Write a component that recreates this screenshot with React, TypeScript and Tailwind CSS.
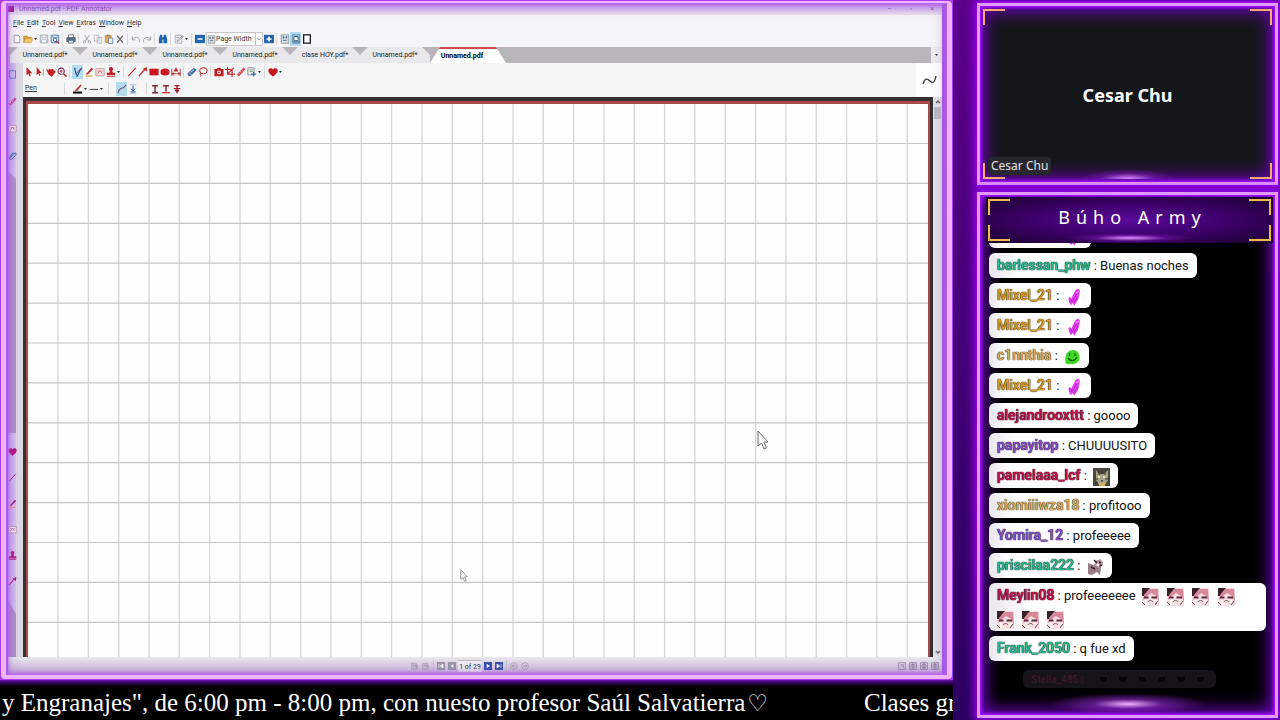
import React from "react";

type IconName = keyof typeof icons;

const icons = {
  file: <path d="M2.5 1.5h5l2 2v7h-7z" fill="#fff" stroke="#8a8a90" />,
  folder: (
    <>
      <path d="M1 10V2.5h4l1 1.500h4V5" fill="#d9a441" stroke="#b98630" />
      <path d="M1 10.500 3 5.500h9l-2 5z" fill="#f0c66a" stroke="#c08d30" strokeWidth=".6" />
    </>
  ),
  save: (
    <>
      <path d="M1.500 1.500h9v9h-9z" fill="#e6e8ec" stroke="#9aa0aa" />
      <path d="M3.500 1.500h5v3h-5zM3 7h6v3.500H3z" fill="#fff" stroke="#9aa0aa" strokeWidth=".7" />
    </>
  ),
  saveAs: (
    <>
      <path d="M1.500 1.500h9v9h-9z" fill="#cfe0f2" stroke="#3f6ea8" />
      <path d="M3.500 1.500h5v2.500h-5z" fill="#fff" stroke="#3f6ea8" strokeWidth=".7" />
      <circle cx="6" cy="7" r="2" fill="#fff" stroke="#26446e" />
      <path d="m7.500 8.500 3.500 3" stroke="#b03030" strokeWidth="1.500" />
    </>
  ),
  print: (
    <>
      <path d="M3 1h6v4H3z" fill="#fff" stroke="#5c6b80" />
      <path d="M1 4.500h10V9H1z" fill="#5f7492" stroke="#3d4c63" />
      <path d="M3 7.500h6V11H3z" fill="#cde3fa" stroke="#3d4c63" strokeWidth=".7" />
    </>
  ),
  cut: (
    <>
      <path d="M3 1l5 7.500M9 1 4 8.500" stroke="#9a9a9e" />
      <circle cx="3" cy="9.500" r="1.500" stroke="#9a9a9e" />
      <circle cx="9" cy="9.500" r="1.500" stroke="#9a9a9e" />
    </>
  ),
  copy: <path d="M1.500 1.500h5.500v7H1.500zM5 4h5.500v7H5z" fill="#f2f2f2" stroke="#b5b5ba" />,
  paste: (
    <>
      <path d="M1.500 2h7v8h-7z" fill="#e8b45a" stroke="#c98a2c" />
      <path d="M3.500 1h3v2h-3z" fill="#777" />
      <path d="M5.500 5h5v6.500h-5z" fill="#fff" stroke="#5577aa" />
    </>
  ),
  remove: <path d="m2.500 2 7 8.500M9.500 2l-7 8.500" stroke="#6c6c70" strokeWidth="1.600" />,
  undo: <path d="M1.500 3v4h4M2 6.500C4 3 10 3.500 10 7.500V10" stroke="#a0a0a5" strokeWidth="1.200" />,
  redo: <path d="M10.500 3v4h-4M10 6.500C8 3 2 3.500 2 7.500V10" stroke="#a0a0a5" strokeWidth="1.200" />,
  find: (
    <>
      <path d="M2.500 1h2.500v3l.5 7H1V6zM7 1h2.500L11 6v5H6.500V4z" fill="#1f66b0" />
      <path d="M5 4h2v3H5z" fill="#174c86" />
    </>
  ),
  edit: (
    <>
      <path d="M1.500 1.500h8v9.500h-8z" fill="#eef1f4" stroke="#a5abb3" />
      <path d="m4 9 .5-2L10 2l1 1-5 5zM3 4h3" stroke="#8b9299" />
    </>
  ),
  minus: (
    <>
      <path d="M0 1h12v10H0z" fill="#2265ad" />
      <path d="M3 6h6" stroke="#fff" strokeWidth="1.800" />
    </>
  ),
  plus: (
    <>
      <path d="M0 1h12v10H0z" fill="#2265ad" />
      <path d="M3 6h6M6 3v6" stroke="#fff" strokeWidth="1.800" />
    </>
  ),
  page: (
    <>
      <path d="M1.500 1h9v10h-9z" fill="#dce7f0" stroke="#7f8b98" />
      <path d="M3.500 4h2M6.500 4h2M3.500 7.500h5M4 2.500v3M8 2.500v3" stroke="#40566e" />
    </>
  ),
  fit: (
    <>
      <path d="M1.500 1h9v10h-9z" fill="#a8d4f2" stroke="#4d85b5" />
      <path d="M3.500 3h5v5h-5zM2 9.500h8" fill="#fff" stroke="#32495f" />
    </>
  ),
  full: <path d="M2 1h8v10H2z" fill="#fff" stroke="#111" strokeWidth="1.500" />,
  arrow: <path d="M3 0v10l2.300-2 1.500 3.500 1.500-.8L6.800 7.500H10z" fill="#c22126" />,
  arrowText: (
    <>
      <path d="M2 0v9.500l2-1.700 1.300 3L6.500 10 5.300 7.200H8z" fill="#c22126" />
      <path d="M10 2v9" stroke="#c98" />
    </>
  ),
  hand: <path d="m0 2 3 2 .5-2L6 3l2-1 2 2.500 1-.5.500 2L9 9l-2 3-4-3z" fill="#c22126" />,
  zoom: (
    <>
      <circle cx="5" cy="5" r="3.700" fill="#e9f0fa" stroke="#7b3550" strokeWidth="1.300" />
      <path d="M3 5h4M5 3v4" stroke="#c22126" />
      <path d="m8 8 3.500 3.500" stroke="#c22126" strokeWidth="1.800" />
    </>
  ),
  pen: (
    <>
      <path d="M2 1 3 6l2 5L9 3l1.500-1.500" stroke="#1e5c9c" strokeWidth="1.500" />
      <path d="m4 8 6-7" stroke="#8d4560" strokeWidth="1.200" />
    </>
  ),
  marker: (
    <>
      <path d="m2 9 7-8 2 1.500L4.500 9z" fill="#c22126" />
      <path d="M2 11h8" stroke="#dca338" strokeWidth="1.500" />
    </>
  ),
  textBox: (
    <>
      <path d="M1 2h10v8.500H1z" fill="#f5e7e7" stroke="#c48f92" />
      <path d="M3 8.500 6 4l2.500 4M3 5h2M7.500 5H9" stroke="#bd6267" />
    </>
  ),
  stamp: <path d="M6 0a2.500 2.500 0 0 1 1.500 4.500L8 7h3v3H1V7h3l.5-2.500A2.500 2.500 0 0 1 6 0M1 11h10v1H1z" fill="#c22126" />,
  line: <path d="m1.500 11 9-10" stroke="#c22126" strokeWidth="1.300" />,
  arrowLine: (
    <>
      <path d="m1 11 7-8" stroke="#c22126" strokeWidth="1.500" />
      <path d="m11 0-.5 5.500L6 2z" fill="#c22126" />
    </>
  ),
  rect: <path d="M.5 2h11v8H.5z" fill="#c9181e" />,
  ellipse: <ellipse cx="6" cy="6" rx="5.500" ry="4.200" fill="#c9181e" />,
  measure: (
    <>
      <path d="M1 2v9M11 2v9M1 8h10" stroke="#c22126" />
      <path d="M6 1 3.500 5h5zM3 6l-2 2 2 2M9 6l2 2-2 2" fill="#c22126" stroke="#c22126" strokeWidth=".6" />
    </>
  ),
  eraser: (
    <>
      <path d="M1 8 8 1.500l3 2L4.500 10.500H2z" fill="#3c68a8" stroke="#2b4d80" strokeWidth=".7" />
      <path d="M3 7.500 6 10M4.500 6.500l4-3.500" stroke="#dfe9f6" />
    </>
  ),
  lasso: (
    <>
      <ellipse cx="6.500" cy="4.500" rx="4.500" ry="3.800" stroke="#c22126" strokeWidth="1.200" />
      <path d="M3 7c-1.500 1.500 1.500 2 0 4.500" stroke="#c22126" strokeWidth="1.200" />
    </>
  ),
  camera: (
    <>
      <path d="M.5 2.500h3L4.500 1h3l1 1.500h3v8.500H.5z" fill="#c22126" />
      <circle cx="6" cy="6.500" r="2.300" fill="#f8e9e9" />
      <circle cx="6" cy="6.500" r="1" fill="#c22126" />
    </>
  ),
  crop: <path d="M3 0v8.500h9M0 3h8.500v9M10.500 1 3.500 8" stroke="#c22126" strokeWidth="1.300" />,
  ruler: (
    <>
      <path d="M1 9 9 .5l2.500 2L3.500 11.500z" fill="#d0474b" />
      <path d="m3 7 1.500 1.500M5 5l1.500 1.500M7 3l1.500 1.500" stroke="#f4d5d5" />
    </>
  ),
  insert: (
    <>
      <path d="M1 1h7.500v8.500H1z" fill="#e9eef3" stroke="#7d8794" />
      <path d="M3 3.500h4M3 5.500h4" stroke="#5aa05f" />
      <path d="M5 8.500h6M8 6v5.500" stroke="#3a70ad" strokeWidth="1.500" />
    </>
  ),
  heart: <path d="M6 11.500C1 7.500 0 5.500.500 3.500S4.500.500 6 3c1.500-2.500 5-1.500 5.500.500S11 7.500 6 11.500" fill="#c5161c" />,
  color: (
    <>
      <path d="m2 8 7-7.500 1.500 1L5 8.500z" fill="#b8373b" />
      <path d="M0 9h11v2.500H0z" fill="#111" />
    </>
  ),
  width: <path d="M1 6.500h10" stroke="#444" strokeWidth="1.200" />,
  curve: <path d="M1 11C4 1 6 9 11 1" stroke="#6a4b74" strokeWidth="1.300" />,
  pressure: (
    <>
      <path d="M2 1h8M2 11h8" stroke="#8fb4d4" />
      <path d="M6 2v5M3.500 5.500 6 8.500l2.500-3M3 9.500h6" stroke="#1f5c9e" strokeWidth="1.200" />
    </>
  ),
  serif: <path d="M2.500 2h7M6 2v8.500M2.500 10.500h7" stroke="#7a2a32" strokeWidth="1.700" />,
  serifRed: (
    <>
      <path d="M2.500 2h7M6 2v7" stroke="#7a2a32" strokeWidth="1.700" />
      <path d="M1 10.500h10" stroke="#d4282c" strokeWidth="1.500" />
    </>
  ),
  pin: <path d="M3 2h6M6 2v9M2 5.500h8M4 7l2 3 2-3" stroke="#a3182c" strokeWidth="1.600" />,
  clip: <path d="m3 9 5-6c1.500-1.500 3.500.5 2.500 2L5.500 11C3 13 .5 10 2 8l5-6" stroke="#6a45b8" strokeWidth="1.200" />,
  note: <path d="M2 1h8v10H2z" stroke="#8b50b8" />,
  first: (
    <>
      <path d="M0 0h12v12H0z" fill="#9997a6" />
      <path d="M3 3v6M9 3 5 6l4 3z" fill="#fff" stroke="#fff" />
    </>
  ),
  prev: (
    <>
      <path d="M0 0h12v12H0z" fill="#9997a6" />
      <path d="M8 3 4 6l4 3z" fill="#fff" />
    </>
  ),
  next: (
    <>
      <path d="M0 0h12v12H0z" fill="#3450a8" />
      <path d="m4 2.500 5 3.500-5 3.500z" fill="#fff" />
    </>
  ),
  last: (
    <>
      <path d="M0 0h12v12H0z" fill="#3450a8" />
      <path d="M9 3v6M3 3l4 3-4 3z" fill="#fff" stroke="#fff" />
    </>
  ),
  back: (
    <>
      <circle cx="6" cy="6" r="5" stroke="#9995a3" />
      <path d="M9 6H3.500M6 3.500 3.500 6 6 8.500" stroke="#8b8796" />
    </>
  ),
  forward: (
    <>
      <circle cx="6" cy="6" r="5" stroke="#9995a3" />
      <path d="M3 6h5.500M6 3.500 8.500 6 6 8.500" stroke="#8b8796" />
    </>
  ),
  grid: <path d="M1 1h10v10H1zM6 1v10M1 6h10M3 3.500h6M3 8.500h6" stroke="#75708c" />,
  single: <path d="M1 1h10v10H1zM4 4h4v5M4 6h2" stroke="#85708f" />,
  rotate: <path d="M1 2h7v9H1zM3 5h7v6M5 7h3" fill="#c2bfcb" stroke="#a19daa" />,
};

function Icon({ name, className = "size-[10px]" }: { name: IconName; className?: string }) {
  return (
    <svg viewBox="0 0 12 12" fill="none" className={`shrink-0 ${className}`} aria-hidden="true">
      {icons[name]}
    </svg>
  );
}

function Tool({ name, active = false }: { name: IconName; active?: boolean }) {
  return (
    <button
      aria-label={name}
      className={`flex h-[14px] w-[11px] shrink-0 items-center justify-center ${active ? "bg-[#b5dcec]" : ""}`}
    >
      <Icon name={name} />
    </button>
  );
}

function Caret() {
  return (
    <svg viewBox="0 0 5 12" className="h-3 w-[5px] shrink-0" aria-hidden="true">
      <path d="M1 5h3L2.500 7z" fill="#333" />
    </svg>
  );
}

function Sep() {
  return <span className="mx-[2px] h-3 w-px shrink-0 bg-[#d9d9dc]" />;
}

function ToolRow({ items }: { items: string[] }) {
  return (
    <>
      {items.map((item, i) => {
        if (item === "|") return <Sep key={i} />;
        if (item === "v") return <Caret key={i} />;
        const active = item.startsWith("*");
        return <Tool key={i} name={(active ? item.slice(1) : item) as IconName} active={active} />;
      })}
    </>
  );
}

const menus = ["File", "Edit", "Tool", "View", "Extras", "Window", "Help"];
const tabs = ["Unnamed.pdf*", "Unnamed.pdf*", "Unnamed.pdf*", "Unnamed.pdf*", "clase HOY.pdf*", "Unnamed.pdf*"];

function TabStrip() {
  return (
    <div className="flex h-4 shrink-0 items-end bg-[#b8b6b9] pl-[2px]">
      <div className="flex h-4 w-[420px] shrink-0 bg-[linear-gradient(#b8b6b9_8px,#e9e8ea_8px)]">
        {tabs.map((tab, i) => (
          <button
            key={i}
            className="flex-1 bg-[#e9e8ea] pt-px text-center leading-[15px] text-[#222] [clip-path:polygon(8px_0,calc(100%-8px)_0,100%_8px,100%_100%,0_100%,0_8px)]"
          >
            {tab}
          </button>
        ))}
      </div>
      <button className="h-4 w-[76px] shrink-0 bg-white text-center font-bold text-black [clip-path:polygon(10px_0,66px_0,100%_100%,0_100%)]">
        <span className="block h-[2px] bg-[#cf4a4a]" />
        <span className="block pr-3 leading-[14px]">Unnamed.pdf</span>
      </button>
      <span className="flex-1" />
      <button aria-label="All documents" className="flex h-4 w-[11px] items-center justify-center bg-[#ececf0]">
        <Caret />
      </button>
    </div>
  );
}

function GraphPaper() {
  const columns = Array.from({ length: 29 }, (_, i) => 30 + i * 30.33);
  const rows = Array.from({ length: 13 }, (_, i) => 39.500 + i * 39.900);
  return (
    <svg viewBox="0 0 900 553" preserveAspectRatio="none" className="absolute inset-0 size-full" aria-hidden="true">
      {columns.map((x) => (
        <path key={x} d={`M${x} 0V553`} stroke="#d6d6d8" strokeWidth="1.300" />
      ))}
      {rows.map((y) => (
        <path key={y} d={`M0 ${y}H900`} stroke="#c6c6c8" strokeWidth="1.200" />
      ))}
    </svg>
  );
}

function Pointer({ className }: { className: string }) {
  return (
    <svg viewBox="0 0 12 20" className={className} aria-hidden="true">
      <path d="M1 1v15l3.500-3 2.500 6 2.500-1-2.500-6H11z" fill="#fff" stroke="#666" />
    </svg>
  );
}

function SideBar() {
  const lower: IconName[] = ["heart", "line", "marker", "textBox", "stamp", "arrowLine"];
  return (
    <div className="flex w-[15px] shrink-0 flex-col bg-[#dcd8e2]">
      <div className="flex w-[8px] flex-1 flex-col items-center bg-linear-to-r from-[#c9a2f8] to-[#d8c6ea]">
        <div className="flex flex-col gap-[18px] pt-[7px] hue-rotate-[-45deg]">
          <Icon name="note" className="size-[9px]" />
          <Icon name="ruler" className="size-[9px]" />
          <Icon name="textBox" className="size-[9px]" />
          <Icon name="clip" className="size-[9px]" />
        </div>
        <div className="mt-[11px] w-full flex-1 bg-linear-to-r from-[#b183e0] to-[#ab98b8] [clip-path:polygon(0_0,100%_8px,100%_100%,0_100%)]" />
        <div className="flex flex-col gap-[17px] py-[14px] hue-rotate-[-45deg]">
          {lower.map((name) => (
            <Icon key={name} name={name} className="size-[9px]" />
          ))}
        </div>
        <div className="h-[57px] w-full bg-linear-to-r from-[#b183e0] to-[#ab98b8] [clip-path:polygon(0_0,100%_14px,100%_100%,0_100%)]" />
      </div>
    </div>
  );
}

function Annotator() {
  return (
    <section className="relative flex min-h-0 flex-1 flex-col overflow-hidden rounded-sm border-t-2 border-r-[5px] border-b-4 border-l-[5px] border-[#f3b4ff] bg-[#a45ae6] pr-[5px] pl-[2px] font-['Roboto',sans-serif] text-[7px] text-[#333]">
      <header className="flex h-3 shrink-0 items-center gap-[5px] bg-linear-to-b from-[#c795f0] to-[#e9e4ee] text-[#8a4fb0]">
        <span className="size-[6px] bg-[#a0108c]" />
        <span className="flex-1 leading-[10px]">Unnamed.pdf - PDF Annotator</span>
        <span className="flex gap-[18px] pr-2 leading-[10px]">
          <span>–</span>
          <span>▫</span>
          <span>×</span>
        </span>
      </header>
      <nav className="flex h-4 shrink-0 items-center gap-[3px] bg-[#f5f4f6] pl-[5px]">
        {menus.map((m) => (
          <button key={m}>
            <span className="underline">{m[0]}</span>
            {m.slice(1)}
          </button>
        ))}
      </nav>
      <div className="flex h-4 shrink-0 items-center bg-[#f5f4f6] pl-[3px]">
        <ToolRow items={["file", "folder", "v", "save", "saveAs", "|", "print", "|", "cut", "copy", "paste", "remove", "|", "undo", "redo", "|", "find", "|", "edit", "v", "|", "minus"]} />
        <label className="ml-px flex h-[14px] w-[57px] items-center border border-[#c5c5ca] bg-white">
          <Icon name="page" className="size-[9px]" />
          <select aria-label="Zoom" className="min-w-0 flex-1 appearance-none bg-transparent leading-3">
            <option>Page Width</option>
          </select>
          <svg viewBox="0 0 8 12" className="h-3 w-[7px] border-l border-[#c5c5ca]" fill="none" aria-hidden="true">
            <path d="m2 5 2 2 2-2" stroke="#555" />
          </svg>
        </label>
        <ToolRow items={["plus", "|", "page", "*fit", "full"]} />
      </div>
      <TabStrip />
      <div className="flex min-h-0 flex-1">
        <SideBar />
        <div className="flex min-w-0 flex-1 flex-col">
          <div className="flex h-[34px] shrink-0 bg-white">
            <div className="flex min-w-0 flex-1 flex-col bg-[#f5f5f6]">
              <div className="flex h-[17px] items-center">
                <ToolRow items={["arrow", "arrowText", "hand", "zoom", "|", "*pen", "marker", "textBox", "stamp", "v", "|", "line", "arrowLine", "rect", "ellipse", "measure", "|", "eraser", "lasso", "|", "camera", "crop", "ruler", "insert", "v", "|", "heart", "v"]} />
              </div>
              <div className="flex h-[17px] items-center pl-[2px]">
                <span className="w-[37px] underline">Pen</span>
                <Sep />
                <span className="w-[5px]" />
                <ToolRow items={["color", "v", "width", "v"]} />
                <span className="w-[2px]" />
                <Sep />
                <span className="w-[5px]" />
                <ToolRow items={["*curve", "pressure"]} />
                <span className="w-[6px]" />
                <Sep />
                <ToolRow items={["serif", "serifRed", "pin"]} />
              </div>
            </div>
            <svg viewBox="0 0 26 34" fill="none" className="h-[34px] w-[26px]" aria-hidden="true">
              <path d="M7 21c2-6 4-6 7-3s5 1 6-5" stroke="#3c3a40" strokeWidth="1.300" />
            </svg>
          </div>
          <div className="flex min-h-0 flex-1">
            <div className="flex min-w-0 flex-1 border-x-[3px] border-t-4 border-[#37302f]">
              <div className="relative min-w-0 flex-1 border-x-2 border-t-[3px] border-[#a8494a] bg-[#fefefe]">
                <GraphPaper />
                <Pointer className="absolute top-[59%] left-[81%] h-5 w-3" />
                <Pointer className="absolute top-[84%] left-[48%] h-[13px] w-2" />
              </div>
            </div>
            <div className="flex w-[9px] shrink-0 flex-col items-center justify-between bg-[#e3e1e9]">
              <div className="flex flex-col items-center">
                <svg viewBox="0 0 8 10" className="h-[10px] w-2" fill="none" aria-hidden="true">
                  <path d="m2 6 2-2 2 2" stroke="#666" strokeWidth="1.500" />
                </svg>
                <span className="h-3 w-[7px] bg-[#bcbac4]" />
              </div>
              <svg viewBox="0 0 8 10" className="h-[10px] w-2" fill="none" aria-hidden="true">
                <path d="m2 4 2 2 2-2" stroke="#666" strokeWidth="1.500" />
              </svg>
            </div>
          </div>
        </div>
      </div>
      <footer className="flex h-[18px] shrink-0 items-center bg-linear-to-b from-[#e9e8ec] to-[#c9b4dc]">
        <div className="flex flex-1 items-center justify-center gap-[3px] pl-[34px]">
          <Icon name="rotate" className="size-[8px]" />
          <Icon name="rotate" className="size-[8px]" />
          <span className="h-3 w-px bg-[#c5c2cc]" />
          <Icon name="first" className="size-[8px]" />
          <Icon name="prev" className="size-[8px]" />
          <input
            aria-label="Page"
            readOnly
            value="1 of 29"
            className="-mx-px h-3 w-[24px] border-t border-[#bbb] bg-[#efedf2] text-center"
          />
          <Icon name="next" className="size-[8px]" />
          <Icon name="last" className="size-[8px]" />
          <span className="h-3 w-px bg-[#c5c2cc]" />
          <Icon name="back" className="size-[8px]" />
          <Icon name="forward" className="size-[8px]" />
        </div>
        <div className="flex w-[44px] gap-[3px]">
          <Icon name="single" className="size-[8px]" />
          <Icon name="grid" className="size-[8px]" />
          <Icon name="grid" className="size-[8px]" />
          <Icon name="grid" className="size-[8px]" />
        </div>
      </footer>
      <div className="pointer-events-none absolute inset-0 shadow-[inset_0_0_4px_2px_#b45cf0,inset_0_0_14px_3px_#8a50b855]" />
    </section>
  );
}

function Corners({ className, inset }: { className: string; inset: string }) {
  return (
    <div className={`pointer-events-none absolute ${inset} ${className}`}>
      <span className="absolute top-0 left-0 h-4 w-[22px] border-t-2 border-l-2 border-inherit" />
      <span className="absolute top-0 right-0 h-4 w-[22px] border-t-2 border-r-2 border-inherit" />
      <span className="absolute bottom-0 left-0 h-4 w-[22px] border-b-2 border-l-2 border-inherit" />
      <span className="absolute right-0 bottom-0 h-4 w-[22px] border-r-2 border-b-2 border-inherit" />
    </div>
  );
}

const neon =
  "relative border-[3px] border-[#e29aff] shadow-[0_0_8px_3px_#9d00f5,inset_0_0_3px_2px_#a010ff,inset_0_0_16px_6px_#6a00b8]";

function Camera() {
  return (
    <section className={`${neon} flex h-[182px] shrink-0 flex-col bg-[#15161a] font-['Noto_Sans',sans-serif] text-white`}>
      <Corners inset="inset-[3px]" className="border-[#ffab72]" />
      <h2 className="flex flex-1 items-center justify-center pt-[27px] text-[18px] font-bold">Cesar Chu</h2>
      <span className="mb-[7px] ml-2 self-start rounded-sm bg-[#29272e] px-[3px] text-[12px] leading-[18px] text-[#e4e2e8]">
        Cesar Chu
      </span>
      <span className="absolute bottom-[3px] left-1/2 h-[10px] w-24 -translate-x-1/2 bg-[radial-gradient(ellipse_at_bottom,#e08cff,#8a20c866_40%,transparent_70%)]" />
    </section>
  );
}

type EmoteName = "glove" | "smile" | "cat" | "pig" | "anime";

const emotes: Record<EmoteName, React.ReactNode> = {
  glove: (
    <>
      <path d="M4 16c-2-4-2-7 0-7l1 2 4-8c1-2 3-3 5-1l-1 6c0 3-2 5-3 7l-2 3-1-3-2 2z" fill="#e63af0" />
      <path d="m6 14 5-9M8 15l4-7M4 10l2 4" stroke="#b02cc0" />
      <path d="m10 5 3-2" stroke="#ff9bff" />
    </>
  ),
  smile: (
    <>
      <path d="M2 16c-1-3-1-9 1-11 3-4 10-4 12 1 2 6-1 10-6 10z" fill="#3fd920" />
      <path d="M5.500 5v3M11 5v3M4 10c3 4 7 3 9-1" fill="none" stroke="#14560c" strokeWidth="1.300" />
    </>
  ),
  cat: (
    <>
      <path d="M0 0h17v18H0z" fill="#4b493f" />
      <path d="m3 2 3 4h5l4-4v10l-3 5H6l-3-5z" fill="#a9a38e" />
      <path d="M6 3v4M9 2v4M12 3v4M2 11h3M12 11h4M5 14l-3 2" stroke="#3b392f" />
      <path d="M5 9h2M10 9h2" stroke="#e4e7b1" strokeWidth="2" />
      <path d="M8 12h2l-1 2z" fill="#2b2520" />
      <path d="M6 15h6v3H6z" fill="#d9ad55" />
    </>
  ),
  pig: (
    <>
      <path d="M1 5l6 2 3-5 6 2-2 5-1 8-3-3-5 3-4-1z" fill="#9a7c86" />
      <path d="m8 3 6-2 2 6-4 3-4-2z" fill="#b996a0" />
      <path d="M7 2l3 3M12 4l2 1M12 8l3-1M4 9l4 2" stroke="#39262e" strokeWidth="1.500" />
      <path d="m10 6 2 2" stroke="#fff" strokeWidth="2" />
    </>
  ),
  anime: (
    <>
      <path d="M0 0h17v18H0z" fill="#f4dfe0" />
      <path d="M0 0h8L2 8H0z" fill="#37222a" />
      <path d="m2 7 5-6h9l1 13-3-6-5-3-5 4-3 3z" fill="#d9889a" />
      <path d="M2 9.500h4.500M9.500 9.500H15" stroke="#5f2a3e" strokeWidth="2" />
      <path d="M6 14c1-2 4-2 5 0M0 14l3 3M16 13l-3 4" fill="none" stroke="#8a4c5d" />
      <path d="M4 12v4h3M13 12v3" stroke="#fff" strokeWidth="1.500" fill="none" />
    </>
  ),
};

function Emote({ name }: { name: EmoteName }) {
  return (
    <svg
      viewBox="0 0 17 18"
      className="-my-[3px] mr-[5px] inline-block h-[18px] w-[17px] align-middle last:mr-0"
      role="img"
      aria-label={name}
    >
      {emotes[name]}
    </svg>
  );
}

interface Message {
  user: string;
  color: string;
  text?: string;
  emotes?: EmoteName[];
}

const orange = "text-[#e09a20]";
const teal = "text-[#2cbb94]";
const crimson = "text-[#c0134e]";
const violet = "text-[#8b4fc8]";
const sand = "text-[#dcae62]";

const messages: Message[] = [
  { user: "Mixel_21", color: orange, emotes: ["glove"] },
  { user: "barlessan_phw", color: teal, text: "Buenas noches" },
  { user: "Mixel_21", color: orange, emotes: ["glove"] },
  { user: "Mixel_21", color: orange, emotes: ["glove"] },
  { user: "c1nnthia", color: sand, emotes: ["smile"] },
  { user: "Mixel_21", color: orange, emotes: ["glove"] },
  { user: "alejandrooxttt", color: crimson, text: "goooo" },
  { user: "papayitop", color: violet, text: "CHUUUUSITO" },
  { user: "pamelaaa_lcf", color: crimson, emotes: ["cat"] },
  { user: "xiomiiiwza18", color: sand, text: "profitooo" },
  { user: "Yomira_12", color: violet, text: "profeeeee" },
  { user: "priscilaa222", color: teal, emotes: ["pig"] },
  {
    user: "Meylin08",
    color: crimson,
    text: "profeeeeeee",
    emotes: ["anime", "anime", "anime", "anime", "anime", "anime", "anime"],
  },
  { user: "Frank_2050", color: teal, text: "q fue xd" },
];

function Chat() {
  return (
    <section className={`${neon} flex min-h-0 flex-1 flex-col bg-black`}>
      <header className="relative mt-[2px] mr-[2px] ml-[6px] flex h-[46px] shrink-0 items-center justify-center bg-[radial-gradient(ellipse_at_center,#5a0a9c,#3c0068_50%,#1b002e)] font-['Noto_Sans',sans-serif] text-white">
        <Corners inset="inset-[2px]" className="border-[#f2b84c]" />
        <h1 className="pb-[6px] pl-[6px] text-[18px] tracking-[6px]">Búho Army</h1>
        <span className="absolute bottom-0 left-1/2 h-[10px] w-32 -translate-x-1/2 bg-[radial-gradient(ellipse_at_center,#e58cff,#8a20c866_40%,transparent_70%)]" />
      </header>
      <ul className="flex min-h-0 flex-1 flex-col items-start justify-end gap-[5px] overflow-hidden pr-[9px] pl-[9px] font-['Roboto',sans-serif] text-[13px] leading-[23px]">
        {messages.map((m, i) => (
          <li
            key={i}
            className="shrink-0 rounded-md bg-linear-to-r from-[#e9e6ee] to-white to-15% px-2 pt-px pb-px text-[#111]"
          >
            <b
              className={`${m.color} text-[14px] leading-[22px] font-medium [text-shadow:0_0_1px_#222,0_0_1px_#333,0_0_1px_currentColor]`}
            >
              {m.user}
            </b>
            <span>&nbsp;: {m.text ? `${m.text} ` : " "}</span>
            {m.emotes && (
              <span className="ml-[3px]">
                {m.emotes.map((e, j) => (
                  <React.Fragment key={j}>
                    {j > 0 && " "}
                    <Emote name={e} />
                  </React.Fragment>
                ))}
              </span>
            )}
          </li>
        ))}
      </ul>
      <div className="mx-[43px] mt-[9px] mb-[27px] flex h-[18px] w-[193px] shrink-0 items-center gap-4 rounded-md bg-[#17131a] px-2 font-['Roboto',sans-serif] text-[10px] text-[#3d1826]">
        <b>Stella_485 :</b>
        <span className="flex flex-1 justify-between pr-1 text-black">
          {Array.from({ length: 6 }, (_, i) => (
            <span key={i} className="h-[5px] w-[7px] rounded-b-full bg-[#050406]" />
          ))}
        </span>
      </div>
      <span className="absolute bottom-0 left-1/2 h-[22px] w-40 -translate-x-1/2 bg-[radial-gradient(ellipse_at_center,#f0b0ff,#a030e088_30%,transparent_70%)]" />
    </section>
  );
}

export default function App() {
  return (
    <main className="flex h-screen overflow-hidden bg-linear-to-b from-[#5c008c] to-[#2b0060]">
      <div className="flex min-w-0 flex-1 flex-col bg-[#a83cf0]">
        <div className="flex min-h-0 flex-1 p-px">
          <Annotator />
        </div>
        <div className="flex h-10 shrink-0 items-center overflow-hidden bg-linear-to-b from-[#6a10a8] to-black to-20% pt-[5px] pl-[2px] font-['Liberation_Serif',serif] text-[25px] leading-[30px] whitespace-nowrap text-white">
          <span>y Engranajes", de 6:00 pm - 8:00 pm, con nuesto profesor Saúl Salvatierra</span>
          <span className="pl-[2px] font-['DejaVu_Sans',sans-serif] text-[23px]">♡</span>
          <span className="pl-[96px]">Clases gr</span>
        </div>
      </div>
      <aside className="ml-6 flex w-[303px] shrink-0 flex-col gap-[7px] pt-[3px] pr-[2px] pb-[2px]">
        <Camera />
        <Chat />
      </aside>
    </main>
  );
}
